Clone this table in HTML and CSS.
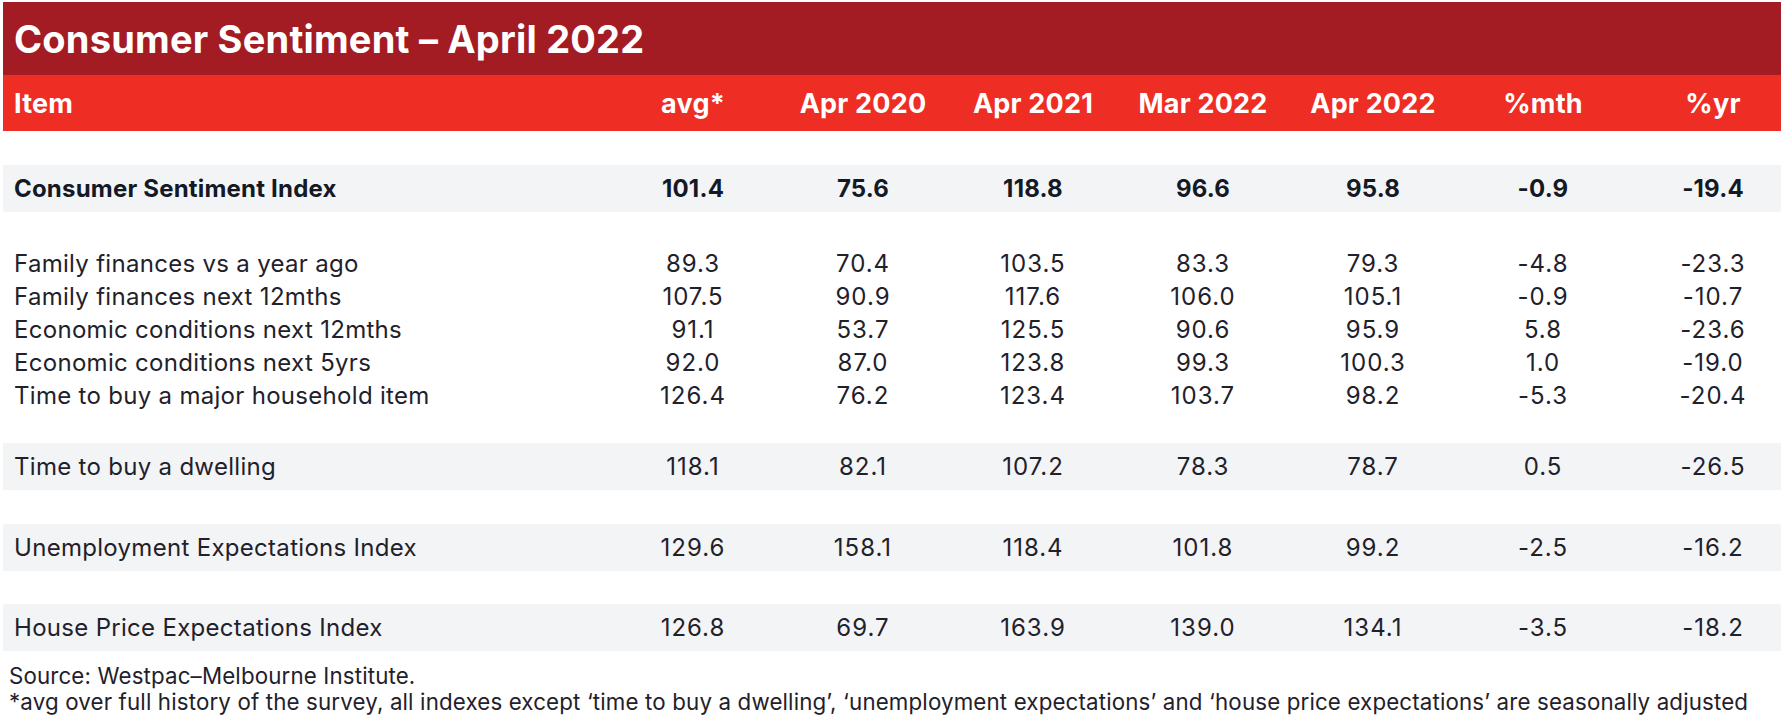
FILE: index.html
```html
<!DOCTYPE html>
<html lang="en">
<head>
<meta charset="utf-8">
<title>Consumer Sentiment – April 2022</title>
<link rel="stylesheet" href="styles.css">
</head>
<body>
<div class="sheet">
  <div class="title">Consumer Sentiment – April 2022</div>
  <div class="row head">
    <div class="label">Item</div><div>avg*</div><div>Apr 2020</div><div>Apr 2021</div><div>Mar 2022</div><div>Apr 2022</div><div>%mth</div><div>%yr</div>
  </div>
  <div class="gap g34"></div>
  <div class="row band bold">
    <div class="label">Consumer Sentiment Index</div><div>101.4</div><div>75.6</div><div>118.8</div><div>96.6</div><div>95.8</div><div>-0.9</div><div>-19.4</div>
  </div>
  <div class="gap g35"></div>
  <div class="row sub">
    <div class="label">Family finances vs a year ago</div><div>89.3</div><div>70.4</div><div>103.5</div><div>83.3</div><div>79.3</div><div>-4.8</div><div>-23.3</div>
  </div>
  <div class="row sub">
    <div class="label">Family finances next 12mths</div><div>107.5</div><div>90.9</div><div>117.6</div><div>106.0</div><div>105.1</div><div>-0.9</div><div>-10.7</div>
  </div>
  <div class="row sub">
    <div class="label">Economic conditions next 12mths</div><div>91.1</div><div>53.7</div><div>125.5</div><div>90.6</div><div>95.9</div><div>5.8</div><div>-23.6</div>
  </div>
  <div class="row sub">
    <div class="label">Economic conditions next 5yrs</div><div>92.0</div><div>87.0</div><div>123.8</div><div>99.3</div><div>100.3</div><div>1.0</div><div>-19.0</div>
  </div>
  <div class="row sub">
    <div class="label">Time to buy a major household item</div><div>126.4</div><div>76.2</div><div>123.4</div><div>103.7</div><div>98.2</div><div>-5.3</div><div>-20.4</div>
  </div>
  <div class="gap g31"></div>
  <div class="row band">
    <div class="label">Time to buy a dwelling</div><div>118.1</div><div>82.1</div><div>107.2</div><div>78.3</div><div>78.7</div><div>0.5</div><div>-26.5</div>
  </div>
  <div class="gap g34"></div>
  <div class="row band">
    <div class="label">Unemployment Expectations Index</div><div>129.6</div><div>158.1</div><div>118.4</div><div>101.8</div><div>99.2</div><div>-2.5</div><div>-16.2</div>
  </div>
  <div class="gap g33"></div>
  <div class="row band">
    <div class="label">House Price Expectations Index</div><div>126.8</div><div>69.7</div><div>163.9</div><div>139.0</div><div>134.1</div><div>-3.5</div><div>-18.2</div>
  </div>
  <div class="notes">
    <p>Source: Westpac–Melbourne Institute.</p>
    <p>*avg over full history of the survey, all indexes except ‘time to buy a dwelling’, ‘unemployment expectations’ and ‘house price expectations’ are seasonally adjusted</p>
  </div>
</div>
</body>
</html>
```
FILE: styles.css
```css
html, body {
  margin: 0;
  padding: 0;
  background: #ffffff;
  overflow: hidden;
}
body {
  font-family: "Inter", "Liberation Sans", sans-serif;
  color: #1f212b;
}
.sheet {
  margin: 2px 0 0 3px;
  overflow: hidden;
}
.title {
  height: 73px;
  background: #a31b23;
  color: #ffffff;
  font-weight: 700;
  font-size: 38px;
  letter-spacing: 0.2px;
  display: flex;
  align-items: center;
  padding-left: 11px;
  box-sizing: border-box;
}
.row {
  display: grid;
  grid-template-columns: 605px repeat(7, 170px);
  width: 1795px;
  align-items: center;
  font-size: 24px;
  letter-spacing: 1px;
}
.row > div {
  text-align: center;
  white-space: nowrap;
}
.row > .label {
  text-align: left;
  padding-left: 11px;
  letter-spacing: 0.3px;
}
.head {
  height: 56px;
  background: #ee2d24;
  color: #ffffff;
  font-weight: 700;
  font-size: 27px;
  letter-spacing: 0.2px;
}
.head > .label {
  letter-spacing: 0.2px;
}
.band {
  height: 47px;
  background: #f3f4f6;
}
.bold {
  font-weight: 700;
  font-size: 24px;
  letter-spacing: 0.2px;
  color: #141926;
}
.bold > .label {
  letter-spacing: 0.2px;
}
.sub {
  height: 33px;
}
.gap { height: 33px; }
.g31 { height: 31px; }
.g34 { height: 34px; }
.g35 { height: 35px; }
.notes {
  padding-top: 12px;
  margin-left: 6px;
  font-size: 22.3px;
  letter-spacing: 0.15px;
  line-height: 26px;
  color: #1f212b;
}
.notes p {
  margin: 0;
  white-space: nowrap;
}
```
